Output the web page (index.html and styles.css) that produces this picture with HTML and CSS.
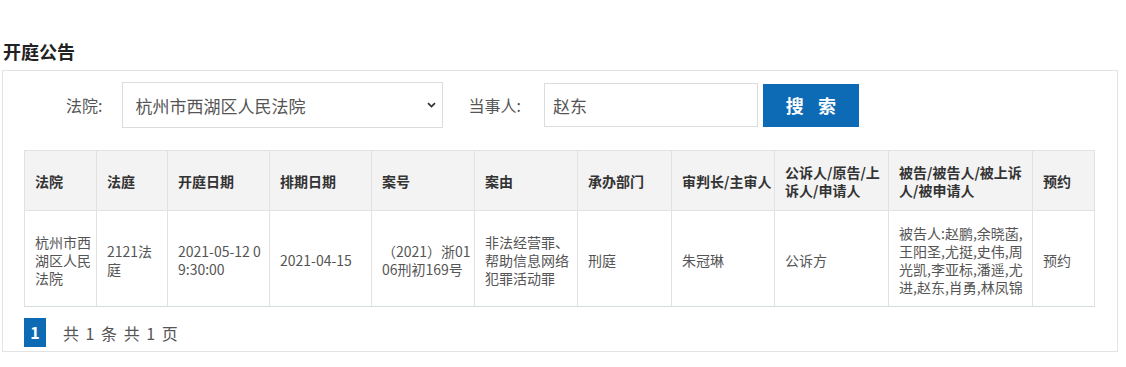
FILE: index.html
```html
<!DOCTYPE html>
<html lang="zh-CN">

<head>
    <meta charset="UTF-8">
    <meta name="viewport" content="width=device-width, initial-scale=1.0">
    <title>开庭公告</title>
    <link rel="stylesheet" href="styles.css">
</head>

<body>
    <div class="page">
        <h2 class="title">开庭公告</h2>
        <div class="panel">
            <form class="search">
                <label class="label">法院:</label>
                <div class="select-wrap">
                    <select class="select">
                        <option>杭州市西湖区人民法院</option>
                    </select>
                    <svg class="chevron" width="9" height="6" viewBox="0 0 9 6">
                        <path d="M1 1.2 L4.5 4.6 L8 1.2" fill="none" stroke="#333" stroke-width="1.8"/>
                    </svg>
                </div>
                <label class="label label-party">当事人:</label>
                <input class="input" type="text" value="赵东">
                <button class="btn" type="button">搜 索</button>
            </form>

            <table class="list">
                <colgroup>
                    <col style="width: 72px">
                    <col style="width: 71px">
                    <col style="width: 102px">
                    <col style="width: 102px">
                    <col style="width: 103px">
                    <col style="width: 103px">
                    <col style="width: 94px">
                    <col style="width: 103px">
                    <col style="width: 114px">
                    <col style="width: 144px">
                    <col style="width: 62px">
                </colgroup>
                <thead>
                    <tr>
                        <th>法院</th>
                        <th>法庭</th>
                        <th>开庭日期</th>
                        <th>排期日期</th>
                        <th>案号</th>
                        <th>案由</th>
                        <th>承办部门</th>
                        <th>审判长/主审人</th>
                        <th>公诉人/原告/上<br>诉人/申请人</th>
                        <th>被告/被告人/被上诉<br>人/被申请人</th>
                        <th>预约</th>
                    </tr>
                </thead>
                <tbody>
                    <tr>
                        <td>杭州市西<br>湖区人民<br>法院</td>
                        <td>2121法<br>庭</td>
                        <td>2021-05-12 0<br>9:30:00</td>
                        <td>2021-04-15</td>
                        <td>（2021）浙01<br>06刑初169号</td>
                        <td>非法经营罪、<br>帮助信息网络<br>犯罪活动罪</td>
                        <td>刑庭</td>
                        <td>朱冠琳</td>
                        <td>公诉方</td>
                        <td>被告人:赵鹏,余晓菡,<br>王阳圣,尤挺,史伟,周<br>光凯,李亚标,潘遥,尤<br>进,赵东,肖勇,林凤锦</td>
                        <td>预约</td>
                    </tr>
                </tbody>
            </table>

            <div class="pager">
                <span class="page-num">1</span>
                <span class="page-info">共 1 条 共 1 页</span>
            </div>
        </div>
    </div>
</body>

</html>
```

FILE: styles.css
```css
body {
    margin: 0;
    font-family: "Noto Sans CJK SC", "Noto Sans", sans-serif;
    color: #555;
    background: #fff;
}

.page {
    padding: 0 9px 0 2px;
}

.title {
    margin: 39px 0 7px 1px;
    font-size: 18px;
    line-height: 24px;
    font-weight: bold;
    color: #222;
}

.panel {
    width: 1116px;
    box-sizing: border-box;
    border: 1px solid #e3e3e3;
    padding: 11px 0 4px 0;
}

.search {
    display: flex;
    align-items: center;
    padding-left: 63px;
    margin: 0 0 22px 0;
}

.label {
    font-size: 16px;
    color: #555;
    margin-right: 20px;
}

.label-party {
    margin-left: 25px;
    margin-right: 23px;
}

.select-wrap {
    position: relative;
}

.select {
    appearance: none;
    -webkit-appearance: none;
    width: 321px;
    height: 46px;
    border: 1px solid #dcdcdc;
    border-radius: 0;
    background: #fff;
    padding: 0 0 0 12px;
    font-family: inherit;
    font-size: 17px;
    color: #555;
    outline: none;
}

.chevron {
    position: absolute;
    right: 7px;
    top: 20px;
}

.input {
    width: 214px;
    height: 44px;
    box-sizing: border-box;
    border: 1px solid #dcdcdc;
    padding: 0 8px;
    font-family: inherit;
    font-size: 17px;
    color: #555;
    outline: none;
}

.btn {
    width: 96px;
    height: 43px;
    margin-left: 5px;
    border: none;
    background-color: #0c6bb4;
    color: #fff;
    font-family: inherit;
    font-size: 18px;
    font-weight: bold;
    word-spacing: 10px;
    cursor: pointer;
}

.list {
    margin-left: 21px;
    width: 1070px;
    table-layout: fixed;
    border-collapse: collapse;
    font-size: 14px;
    line-height: 18px;
}

.list th,
.list td {
    border: 1px solid #e2e2e2;
    text-align: left;
    vertical-align: middle;
    white-space: nowrap;
    padding: 0 2px 0 10px;
}

.list th {
    height: 59px;
    background: #f3f3f3;
    color: #333;
    font-weight: bold;
}

.list td {
    height: 93px;
    padding-top: 2px;
    color: #555;
}

.list tbody tr td {
    border-bottom-color: #d3dfdc;
}

.pager {
    display: flex;
    align-items: center;
    margin: 11px 0 0 21px;
}

.page-num {
    width: 22px;
    height: 29px;
    line-height: 29px;
    text-align: center;
    background-color: #0c6bb4;
    color: #fff;
    font-size: 16px;
    font-weight: bold;
}

.page-info {
    margin-left: 17px;
    font-size: 16px;
    word-spacing: 3px;
    color: #555;
}
```
